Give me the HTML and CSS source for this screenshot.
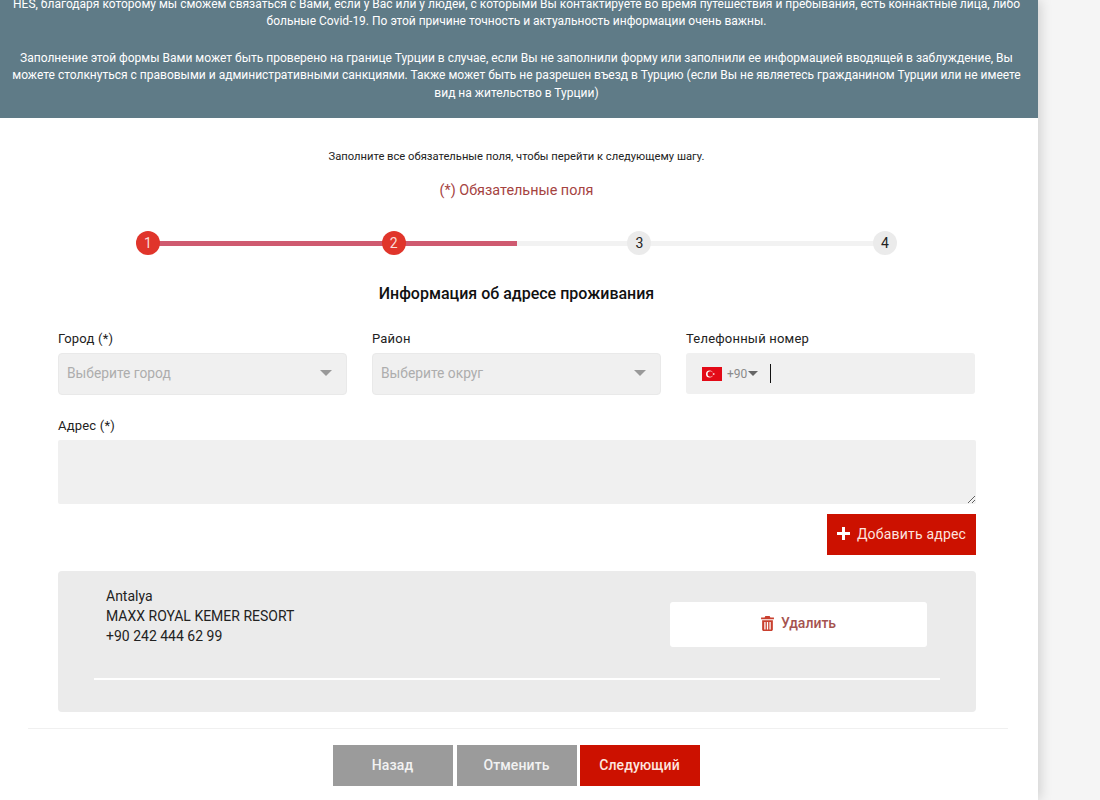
FILE: index.html
```html
<!DOCTYPE html>
<html lang="ru">
<head>
    <meta charset="UTF-8">
    <meta name="viewport" content="width=device-width, initial-scale=1.0">
    <title>Информация об адресе проживания</title>
    <link rel="stylesheet" href="styles.css">
</head>
<body>

<div class="panel">
    <div class="banner">
        <div class="banner-text">
            <p>HES, благодаря которому мы сможем связаться с Вами, если у Вас или у людей, с которыми Вы контактируете во время путешествия и пребывания, есть коннактные лица, либо<br>больные Covid-19. По этой причине точность и актуальность информации очень важны.</p>
            <p>Заполнение этой формы Вами может быть проверено на границе Турции в случае, если Вы не заполнили форму или заполнили ее информацией вводящей в заблуждение, Вы<br>можете столкнуться с правовыми и административными санкциями. Также может быть не разрешен въезд в Турцию (если Вы не являетесь гражданином Турции или не имеете<br>вид на жительство в Турции)</p>
        </div>
    </div>

    <p class="hint">Заполните все обязательные поля, чтобы перейти к следующему шагу.</p>
    <p class="required">(*) Обязательные поля</p>

    <div class="stepper">
        <div class="track"><div class="track-fill"></div></div>
        <span class="step active">1</span>
        <span class="step active">2</span>
        <span class="step">3</span>
        <span class="step">4</span>
    </div>

    <h2 class="section-title">Информация об адресе проживания</h2>

    <div class="form">
        <div class="row">
            <div class="field">
                <label>Город (*)</label>
                <div class="select"><span>Выберите город</span><i class="arrow"></i></div>
            </div>
            <div class="field">
                <label>Район</label>
                <div class="select"><span>Выберите округ</span><i class="arrow"></i></div>
            </div>
            <div class="field">
                <label>Телефонный номер</label>
                <div class="phone">
                    <svg class="flag" viewBox="0 0 20 14" width="20" height="14">
                        <rect width="20" height="14" fill="#e30a17"/>
                        <circle cx="7.5" cy="7" r="3.5" fill="#fff"/>
                        <circle cx="8.4" cy="7" r="2.8" fill="#e30a17"/>
                        <polygon points="10.2,7 12.8,6.1 11.2,8.3 11.2,5.7 12.8,7.9" fill="#fff"/>
                    </svg>
                    <span class="dial">+90</span>
                    <i class="arrow arrow-small"></i>
                    <i class="caret"></i>
                </div>
            </div>
        </div>

        <label class="address-label">Адрес (*)</label>
        <textarea class="address-input"></textarea>

        <div class="add-row">
            <button class="btn-add">
                <svg viewBox="0 0 14 14" width="13" height="13"><path d="M5.4 0h3.2v5.4H14v3.2H8.6V14H5.4V8.6H0V5.4h5.4z" fill="#fff"/></svg>
                Добавить адрес
            </button>
        </div>

        <div class="address-card">
            <div class="address-top">
                <div class="address-lines">
                    <div>Antalya</div>
                    <div>MAXX ROYAL KEMER RESORT</div>
                    <div>+90 242 444 62 99</div>
                </div>
                <button class="btn-delete">
                    <svg viewBox="0 0 12 14" width="13" height="15"><path d="M4 0h4l.7 1.5H12V3H0V1.500h3.300zM1 4h10v8.600c0 .8-.6 1.400-1.400 1.400H2.400c-.8 0-1.400-.6-1.400-1.400zm2 1.500v7h1.200v-7zm2.400 0v7h1.200v-7zm2.400 0v7H9v-7z" fill="#c9402f" fill-rule="evenodd"/></svg>
                    Удалить
                </button>
            </div>
            <div class="card-line"></div>
        </div>
    </div>

    <div class="footer">
        <button class="btn btn-grey">Назад</button>
        <button class="btn btn-grey">Отменить</button>
        <button class="btn btn-red">Следующий</button>
    </div>
</div>

</body>
</html>
```

FILE: styles.css
```css
html, body {
    margin: 0;
    padding: 0;
    height: 800px;
    overflow: hidden;
}

body {
    font-family: 'Roboto', 'Liberation Sans', sans-serif;
    background-color: #f5f5f5;
    color: #222;
}

.panel {
    width: 1038px;
    height: 800px;
    background-color: #fff;
    box-shadow: 2px 0 12px rgba(0, 0, 0, 0.16);
    overflow: hidden;
}

.banner {
    height: 118px;
    background-color: #5f7b87;
    color: #fff;
    display: flex;
    align-items: flex-end;
    overflow: hidden;
}

.banner-text {
    width: 1033px;
    padding-bottom: 16px;
    font-size: 12px;
    line-height: 17.5px;
    text-align: center;
    white-space: nowrap;
}

.banner-text p {
    margin: 0 0 19px;
}

.banner-text p:last-child {
    margin-bottom: 0;
}

.hint {
    width: 1033px;
    margin: 32px 0 0;
    font-size: 11.2px;
    line-height: 14px;
    text-align: center;
    color: #222;
}

.required {
    width: 1033px;
    margin: 18px 0 0;
    font-size: 14.4px;
    line-height: 18px;
    text-align: center;
    color: #a5433f;
}

.stepper {
    position: relative;
    display: flex;
    justify-content: space-between;
    width: 761px;
    margin: 31px 0 0 136px;
}

.track {
    position: absolute;
    left: 12px;
    right: 12px;
    top: 10px;
    height: 5px;
    background-color: #f2f2f2;
}

.track-fill {
    width: 369px;
    height: 100%;
    background-color: #cf5a70;
}

.step {
    position: relative;
    width: 24px;
    height: 24px;
    border-radius: 50%;
    background-color: #ebebeb;
    color: #222;
    font-size: 14px;
    line-height: 24px;
    text-align: center;
}

.step.active {
    background-color: #e0352b;
    color: #fbdcd9;
}

.section-title {
    width: 1033px;
    margin: 29px 0 0;
    font-size: 16px;
    font-weight: 500;
    line-height: 20px;
    text-align: center;
    color: #111;
}

.form {
    width: 918px;
    margin: 26px 0 0 58px;
}

.row {
    display: grid;
    grid-template-columns: 289px 289px 289px;
    column-gap: 25px;
}

.field label, .address-label {
    display: block;
    font-size: 13px;
    line-height: 18px;
    color: #222;
    letter-spacing: 0.2px;
}

.select {
    display: flex;
    align-items: center;
    justify-content: space-between;
    box-sizing: border-box;
    height: 42px;
    margin-top: 5px;
    padding: 0 14px 2px 8px;
    background-color: #f0f0f0;
    border: 1px solid #e9e9e9;
    border-radius: 4px;
    font-size: 13.8px;
    color: #adadad;
}

.arrow {
    width: 0;
    height: 0;
    border-left: 6px solid transparent;
    border-right: 6px solid transparent;
    border-top: 6px solid #999;
}

.arrow-small {
    margin-left: 1px;
    border-left-width: 5px;
    border-right-width: 5px;
    border-top: 5px solid #666;
}

.phone {
    display: flex;
    align-items: center;
    height: 41px;
    margin-top: 5px;
    padding-left: 16px;
    background-color: #f0f0f0;
    border-radius: 3px;
    font-size: 12px;
    color: #8a8a8a;
}

.flag {
    display: block;
    margin-right: 5px;
}

.caret {
    width: 1px;
    height: 19px;
    margin-left: 12px;
    background-color: #111;
}

.address-label {
    margin-top: 22px;
}

.address-input {
    display: block;
    box-sizing: border-box;
    width: 918px;
    height: 64px;
    margin: 5px 0 0;
    background-color: #f0f0f0;
    border: none;
    border-radius: 2px;
}

.add-row {
    display: flex;
    justify-content: flex-end;
    margin-top: 10px;
}

.btn-add {
    display: flex;
    align-items: center;
    justify-content: center;
    gap: 7px;
    box-sizing: border-box;
    width: 149px;
    height: 41px;
    padding: 0 0 2px;
    background-color: #cc1100;
    border: none;
    color: #fde4df;
    font-family: inherit;
    font-size: 14px;
    letter-spacing: 0.2px;
    cursor: pointer;
}

.address-card {
    box-sizing: border-box;
    height: 141px;
    margin-top: 16px;
    padding: 15px 36px 0;
    background-color: #ebebeb;
    border-radius: 4px;
}

.address-top {
    display: flex;
    justify-content: space-between;
    align-items: flex-start;
    height: 92px;
    padding: 0 13px 0 12px;
}

.address-lines {
    font-size: 14px;
    line-height: 20px;
    color: #222;
}

.btn-delete {
    display: flex;
    align-items: center;
    justify-content: center;
    gap: 7px;
    box-sizing: border-box;
    width: 257px;
    height: 45px;
    margin-top: 16px;
    padding: 0 0 3px;
    background-color: #fff;
    border: none;
    border-radius: 3px;
    color: #a5534f;
    font-family: inherit;
    font-size: 14px;
    font-weight: 500;
    cursor: pointer;
}

.card-line {
    height: 2px;
    background-color: #fff;
}

.footer {
    display: flex;
    justify-content: center;
    width: 980px;
    height: 57px;
    box-sizing: border-box;
    margin: 16px 0 0 28px;
    padding: 16px 4px 0 0;
    border-top: 1px solid #f0f0f0;
}

.btn {
    box-sizing: border-box;
    width: 120px;
    height: 41px;
    padding: 0 0 2px;
    border: none;
    color: #f2f2f2;
    font-family: inherit;
    font-size: 14px;
    font-weight: 500;
    letter-spacing: 0.1px;
    cursor: pointer;
}

.btn-grey {
    background-color: #9b9b9b;
    margin-right: 4px;
}

.btn-grey + .btn-grey {
    margin-right: 3px;
}

.btn-red {
    background-color: #cc1100;
    color: #fde4df;
}
```
